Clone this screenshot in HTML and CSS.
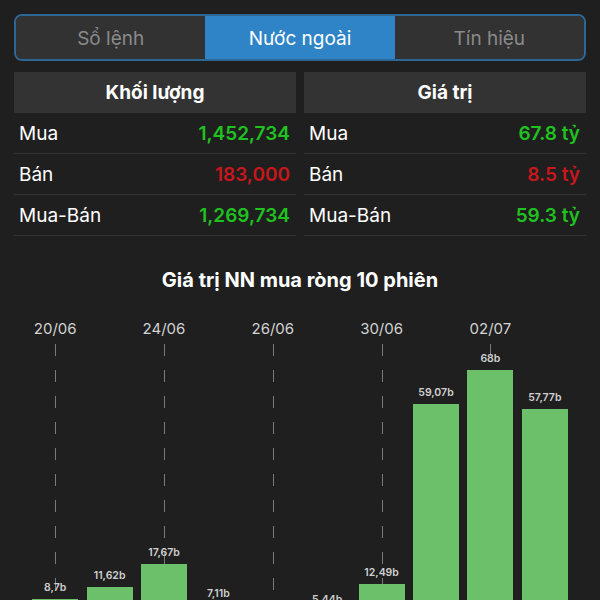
FILE: index.html
```html
<!DOCTYPE html>
<html>
<head>
  <title>Nước ngoài</title>
  <link rel="stylesheet" href="styles.css">
</head>
<body>
  <div class="tabs">
    <div class="tab">Sổ lệnh</div>
    <div class="tab active">Nước ngoài</div>
    <div class="tab">Tín hiệu</div>
  </div>

  <div class="tables">
    <div class="table">
      <div class="table-head">Khối lượng</div>
      <div class="row"><span>Mua</span><span class="up">1,452,734</span></div>
      <div class="row"><span>Bán</span><span class="down">183,000</span></div>
      <div class="row"><span>Mua-Bán</span><span class="up">1,269,734</span></div>
    </div>
    <div class="table">
      <div class="table-head">Giá trị</div>
      <div class="row"><span>Mua</span><span class="up">67.8 tỷ</span></div>
      <div class="row"><span>Bán</span><span class="down">8.5 tỷ</span></div>
      <div class="row"><span>Mua-Bán</span><span class="up">59.3 tỷ</span></div>
    </div>
  </div>

  <h2 class="chart-title">Giá trị NN mua ròng 10 phiên</h2>

  <div class="chart">
    <div class="col"><span class="date">20/06</span><i class="grid-line"></i><span class="val">8,7b</span><div class="bar" style="height:33.5px"></div></div>
    <div class="col"><span class="val">11,62b</span><div class="bar" style="height:44.8px"></div></div>
    <div class="col"><span class="date">24/06</span><i class="grid-line"></i><span class="val">17,67b</span><div class="bar" style="height:68.1px"></div></div>
    <div class="col"><span class="val">7,11b</span><div class="bar" style="height:27.4px"></div></div>
    <div class="col"><span class="date">26/06</span><i class="grid-line"></i></div>
    <div class="col"><span class="val">5,44b</span><div class="bar" style="height:21px"></div></div>
    <div class="col"><span class="date">30/06</span><i class="grid-line"></i><span class="val">12,49b</span><div class="bar" style="height:48.1px"></div></div>
    <div class="col"><span class="val">59,07b</span><div class="bar" style="height:227.7px"></div></div>
    <div class="col"><span class="date">02/07</span><i class="grid-line"></i><span class="val">68b</span><div class="bar" style="height:262px"></div></div>
    <div class="col"><span class="val">57,77b</span><div class="bar" style="height:222.7px"></div></div>
  </div>
</body>
</html>
```
FILE: styles.css
```css
html, body {
  height: 100%;
  overflow: hidden;
}

body {
  background-color: #1f1f1f;
  font-family: Inter, "Noto Sans", sans-serif;
  color: #fff;
  margin: 0;
  padding: 14px 14px 0;
  box-sizing: border-box;
}

.tabs {
  display: flex;
  height: 47px;
  border: 2px solid #2d6794;
  border-radius: 8px;
  overflow: hidden;
  box-sizing: border-box;
}

.tab {
  flex: 1;
  display: flex;
  align-items: center;
  justify-content: center;
  padding-top: 1px;
  background-color: #323232;
  color: #8a8a8a;
  font-size: 19px;
}

.tab.active {
  background-color: #2e84c6;
  color: #fff;
}

.tables {
  display: flex;
  gap: 8px;
  margin-top: 11px;
}

.table {
  flex: 1;
}

.table-head {
  height: 41px;
  display: flex;
  align-items: center;
  justify-content: center;
  background-color: #333;
  font-size: 19px;
  font-weight: 700;
}

.row {
  height: 39px;
  display: flex;
  align-items: center;
  justify-content: space-between;
  padding: 1px 6px 0 5px;
  border-bottom: 1px solid #333;
  font-size: 19px;
}

.up {
  color: #1fc21f;
  font-weight: 600;
}

.down {
  color: #c8161d;
  font-weight: 600;
}

.chart-title {
  text-align: center;
  font-size: 20px;
  font-weight: 700;
  margin: 32px 0 0;
  line-height: 24px;
}

.chart {
  display: grid;
  grid-template-columns: repeat(10, 1fr);
  margin: 28px 14px 0;
  height: 312px;
}

.col {
  position: relative;
  display: flex;
  flex-direction: column;
  justify-content: flex-end;
  align-items: center;
}

.date {
  position: absolute;
  top: 0;
  left: 0;
  right: 0;
  text-align: center;
  font-size: 15px;
  line-height: 18px;
  color: #d2d2d2;
}

.grid-line {
  position: absolute;
  top: 24px;
  bottom: 0;
  left: 50%;
  width: 1px;
  background: repeating-linear-gradient(#7a7a7a 0 12px, transparent 12px 26px);
}

.val {
  position: relative;
  font-size: 10.5px;
  font-weight: 600;
  color: #d0d0d0;
  line-height: 13px;
  margin-bottom: 5px;
}

.bar {
  position: relative;
  width: 46px;
  background-color: #6dc06a;
}
```
